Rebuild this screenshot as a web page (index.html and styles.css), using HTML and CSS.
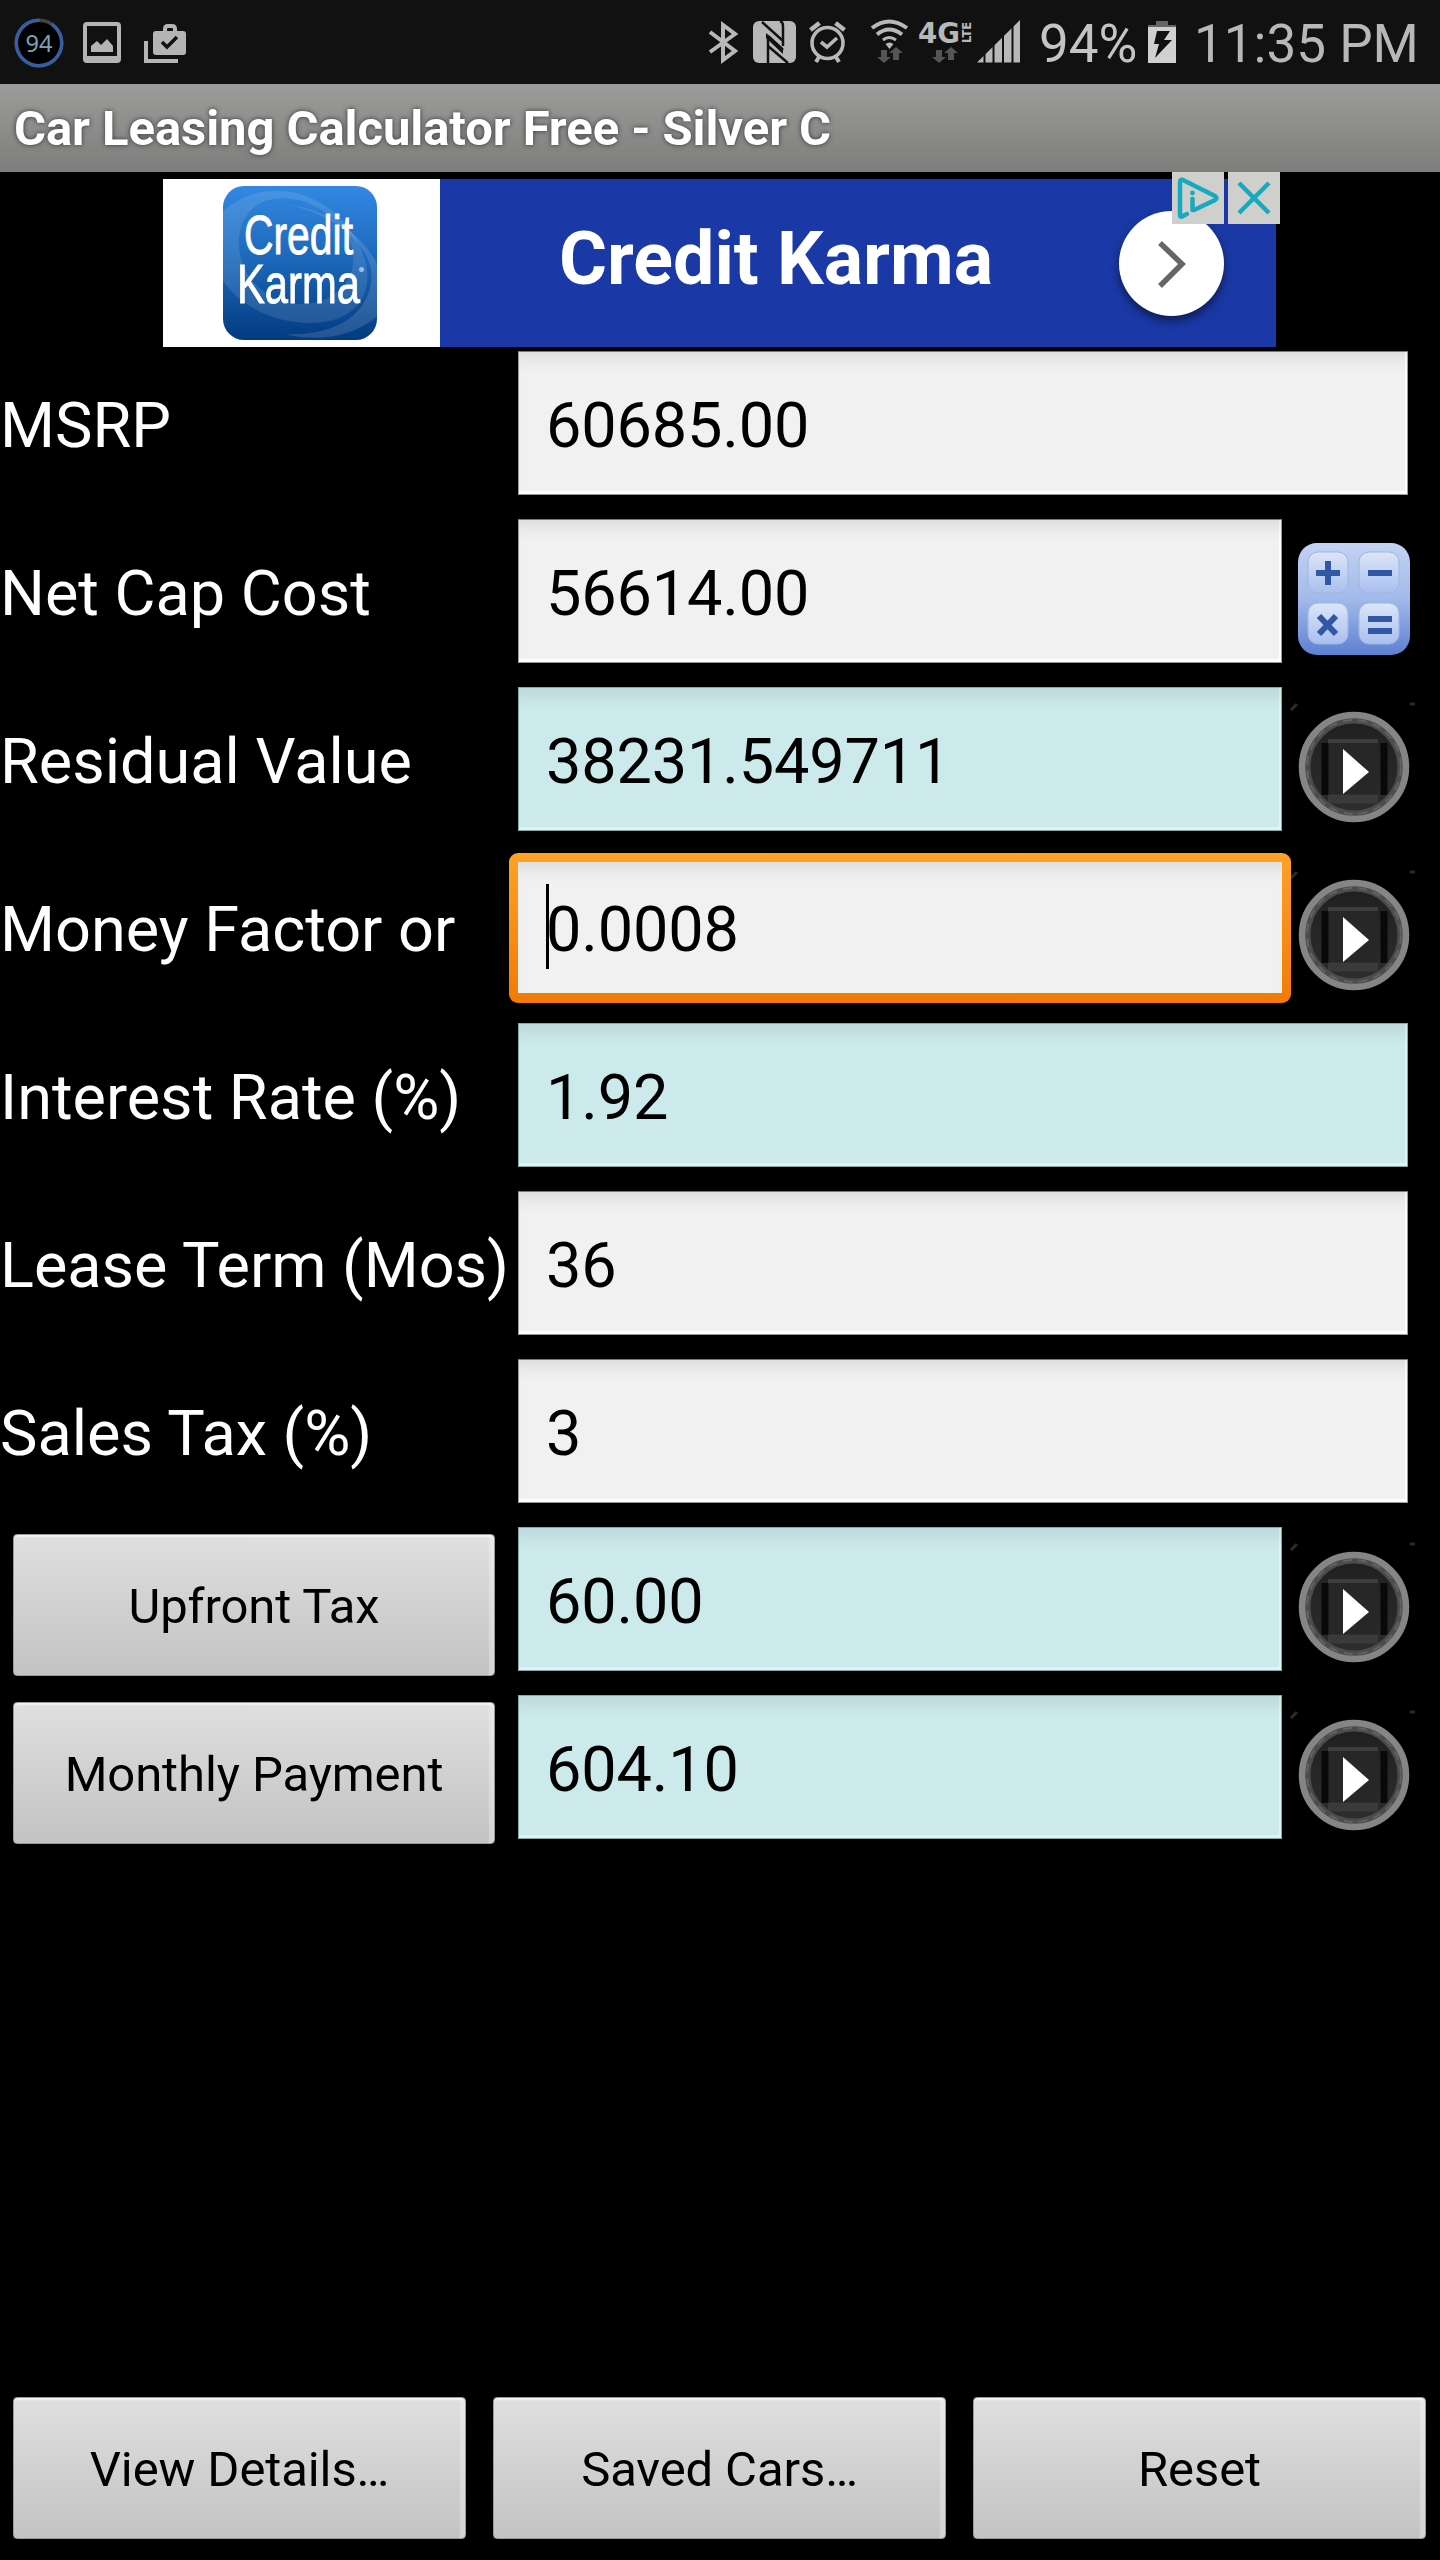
FILE: index.html
```html
<!DOCTYPE html>
<html lang="en">
<head>
  <meta charset="UTF-8">
  <title>Car Leasing Calculator Free - Silver C</title>
  <link rel="stylesheet" href="styles.css">
</head>
<body>
  <svg width="0" height="0" class="defs">
    <defs>
      <linearGradient id="ringFill" x1="0" y1="0" x2="0" y2="1">
        <stop offset="0" stop-color="#1f1f1f"/><stop offset="1" stop-color="#2e2e2e"/>
      </linearGradient>
      <linearGradient id="calcFill" x1="0" y1="0" x2="0" y2="1">
        <stop offset="0" stop-color="#c3d3f3"/><stop offset=".5" stop-color="#a3b9ea"/><stop offset="1" stop-color="#5c80d2"/>
      </linearGradient>
      <linearGradient id="keyFill" x1="0" y1="0" x2="0" y2="1">
        <stop offset="0" stop-color="#dce6f8"/><stop offset="1" stop-color="#a9bfee"/>
      </linearGradient>
      <linearGradient id="karmaFill" x1="0" y1="0" x2="0" y2="1">
        <stop offset="0" stop-color="#3388e2"/><stop offset=".5" stop-color="#1b66b8"/><stop offset="1" stop-color="#023b80"/>
      </linearGradient>
      <clipPath id="karmaClip"><rect width="154" height="154" rx="21"/></clipPath>
      <symbol id="play" viewBox="0 0 130 130">
        <path d="M2 8l6-6M121 2h5" stroke="#2c2c2c" stroke-width="3"/>
        <circle cx="65" cy="65" r="53" fill="url(#ringFill)"/>
        <rect x="39" y="37" width="50" height="60" fill="#272727"/>
        <path d="M36 41v52M95 41v52" stroke="#090909" stroke-width="7"/>
        <path d="M39 39h50" stroke="#3d3d3d" stroke-width="4"/>
        <path d="M39 97h50" stroke="#3a3a3a" stroke-width="9"/>
        <circle cx="65" cy="65" r="46.500" fill="none" stroke="#4c4c4c" stroke-width="6"/>
        <circle cx="65" cy="65" r="47" fill="none" stroke="#626262" stroke-width="2" stroke-dasharray="9 6"/>
        <circle cx="65" cy="65" r="52" fill="none" stroke="#858585" stroke-width="6.500"/>
        <path d="M54 47l26 23-26 22z" fill="#fff"/>
      </symbol>
    </defs>
  </svg>

  <header class="status">
    <div class="status-left">
      <svg class="battery-ring" width="50" height="50" viewBox="0 0 50 50">
        <circle cx="25" cy="25" r="22.7" fill="#000" stroke="#444" stroke-width="3.4"/>
        <circle cx="25" cy="25" r="22.7" fill="none" stroke="#375da3" stroke-width="3.4" stroke-dasharray="129 14" transform="rotate(-56 25 25)"/>
        <text x="25" y="34" text-anchor="middle" class="ring-text" textLength="27" lengthAdjust="spacingAndGlyphs">94</text>
      </svg>
      <svg class="picture" width="38" height="42" viewBox="0 0 38 42">
        <path fill="#b4b4b4" fill-rule="evenodd" d="M4 0h30q4 0 4 4v33q0 4-4 4H4q-4 0-4-4V4q0-4 4-4zM4 4v30h30V4z"/>
        <path fill="#b4b4b4" d="M8 30v-6l6-5 4 4 6-6 6 7v6z"/>
      </svg>
      <svg class="briefcase" width="42" height="40" viewBox="0 0 42 40">
        <path d="M2 17v20h32" fill="none" stroke="#b4b4b4" stroke-width="4"/>
        <path d="M21 9V5q0-3 3-3h4q3 0 3 3v4" fill="none" stroke="#b4b4b4" stroke-width="4"/>
        <rect x="9" y="7" width="33" height="24" rx="3" fill="#b4b4b4"/>
        <path d="M18 18l5 5 10-10" fill="none" stroke="#111" stroke-width="3.6"/>
      </svg>
    </div>
    <div class="status-right">
      <svg width="332" height="84" viewBox="0 0 332 84">
        <g fill="none" stroke="#b8b8b8">
          <path d="M20 32l25 19-12 9V25l12 9-25 18" stroke-width="4"/>
          <circle cx="137.500" cy="43" r="15.500" stroke-width="3.600"/>
          <path d="M131 42l6 5 10-9" stroke-width="3.600"/>
          <path d="M120.500 30l9-7M154.500 30l-9-7" stroke-width="4.500"/>
          <path d="M129 57l-3 5M146 57l3 5" stroke-width="4"/>
          <path d="M182 28q17-13 35 0" stroke-width="4"/>
          <path d="M187 34.500q12-10 25 0" stroke-width="4"/>
          <path d="M193 40q6-5 13 0" stroke-width="3"/>
        </g>
        <path d="M195.500 44q4-3 8 0l-4 5z" fill="#b8b8b8"/>
        <rect x="63" y="21" width="43" height="42" rx="6" fill="#b8b8b8"/>
        <!-- N mark cut out of the tile -->
        <path d="M72 22l21 19V26q0-4-3-5M98 63L78 46v17M78 36v10M93 41v5M78 36l15 14" fill="none" stroke="#111" stroke-width="2.500"/>
        <path d="M76 38l17 16v-6L76 33zM74 24v39" fill="#111"/>
        <g fill="#555">
          <path d="M191 50h6v7h4l-7 6-7-6h4zM203 60h6v-7h4l-7-6-7 6h4z"/>
          <path d="M246 50h6v7h4l-7 6-7-6h4zM258 60h6v-7h4l-7-6-7 6h4z"/>
        </g>
        <text x="228" y="43" class="net" textLength="42" lengthAdjust="spacingAndGlyphs">4G</text>
        <text x="-43" y="281" class="lte" transform="rotate(-90)" textLength="21" lengthAdjust="spacingAndGlyphs">LTE</text>
        <path d="M287 62.500L330 20v42.500z" fill="#b8b8b8"/>
        <path d="M294.500 44v20M303.500 35v29M313 28v36M322.500 20v44" stroke="#111" stroke-width="2"/>
      </svg>
      <span class="percent">94%</span>
      <svg class="charge" width="28" height="42" viewBox="0 0 28 42">
        <path d="M8 0h12v4h8v3H0V4h8z" fill="#666"/>
        <path d="M0 6h28v36H0z" fill="#d0d0d0"/>
        <path d="M9 10h13l-6 9h8L7 37l4-14H6z" fill="#111"/>
      </svg>
      <span class="clock">11:35 PM</span>
    </div>
  </header>

  <h1 class="title">Car Leasing Calculator Free - Silver C</h1>

  <section class="ad">
    <div class="ad-logo">
      <svg width="154" height="154" viewBox="0 0 154 154">
        <g clip-path="url(#karmaClip)">
          <rect width="154" height="154" fill="url(#karmaFill)"/>
          <path d="M-6 32C30-10 95-2 128 45c32 46 16 91-38 92C50 138 12 118-4 88z M50 13C18 18 8 55 22 83c16 34 58 44 87 27 28-18 27-52 6-73C98 20 75 9 50 13z" fill="#fff" fill-opacity=".11" fill-rule="evenodd"/>
          <path d="M64 19c50 4 94 45 96 81v24c-20 24-62 34-98 24 42 2 79-13 86-50C154 62 112 27 64 19z" fill="#fff" fill-opacity=".13"/>
        </g>
        <text x="21" y="68" class="karma" textLength="109" lengthAdjust="spacingAndGlyphs">Credit</text>
        <text x="14" y="117" class="karma" textLength="123" lengthAdjust="spacingAndGlyphs">Karma</text>
        <circle cx="138.500" cy="83.500" r="2.500" fill="#9fc0e6"/>
      </svg>
    </div>
    <div class="ad-name">Credit Karma</div>
    <div class="ad-go">
      <svg width="105" height="105" viewBox="0 0 105 105"><path d="M41 32l22 21-22 22" fill="none" stroke="#666" stroke-width="5.500"/></svg>
    </div>
    <div class="ad-marks">
      <svg width="52" height="52" viewBox="0 0 52 52">
        <path d="M15 42l-5 2.500q-2 1-2-2V10q0-3 3-2l32 16q3 2 0 4L22 38" fill="none" stroke="#18a9c2" stroke-width="4.500" stroke-linecap="round"/>
        <path d="M20.500 27v11" stroke="#18a9c2" stroke-width="4.500" stroke-linecap="round"/>
        <circle cx="20.500" cy="21" r="2.400" fill="#18a9c2"/>
      </svg>
      <svg width="52" height="52" viewBox="0 0 52 52"><path d="M11 11l30 30M41 11L11 41" stroke="#18a9c2" stroke-width="4.500"/></svg>
    </div>
  </section>

  <main class="form">
    <div class="row"><label>MSRP</label><div class="field wide">60685.00</div></div>
    <div class="row"><label>Net Cap Cost</label><div class="field">56614.00</div>
      <svg class="calc" width="112" height="112" viewBox="0 0 112 112">
        <rect width="112" height="112" rx="19" fill="url(#calcFill)"/>
        <g fill="url(#keyFill)" stroke="#a0b5e4">
          <rect x="10" y="9" width="40" height="41" rx="10"/><rect x="61" y="9" width="40" height="41" rx="10"/>
          <rect x="10" y="60" width="40" height="41" rx="10"/><rect x="61" y="60" width="40" height="41" rx="10"/>
        </g>
        <path d="M18 30h24M30 18v24M70 30h24M21 73l17 18M38 73L21 91M70 76h24M70 88h24" stroke="#3157a6" stroke-width="6"/>
      </svg>
    </div>
    <div class="row"><label>Residual Value</label><div class="field calculated">38231.549711</div><svg class="play"><use href="#play"/></svg></div>
    <div class="row"><label>Money Factor or</label><div class="field focused"><i class="caret"></i>0.0008</div><svg class="play"><use href="#play"/></svg></div>
    <div class="row"><label>Interest Rate (%)</label><div class="field wide calculated">1.92</div></div>
    <div class="row"><label>Lease Term (Mos)</label><div class="field wide">36</div></div>
    <div class="row"><label>Sales Tax (%)</label><div class="field wide">3</div></div>
    <div class="row"><button class="btn">Upfront Tax</button><div class="field calculated">60.00</div><svg class="play"><use href="#play"/></svg></div>
    <div class="row"><button class="btn">Monthly Payment</button><div class="field calculated">604.10</div><svg class="play"><use href="#play"/></svg></div>
  </main>

  <footer class="actions">
    <button class="btn">View Details…</button>
    <button class="btn">Saved Cars…</button>
    <button class="btn">Reset</button>
  </footer>
</body>
</html>
```
FILE: styles.css
```css
* { box-sizing: border-box; }
body { margin: 0; width: 1440px; height: 2560px; background: #000; color: #fff; font-family: Roboto, sans-serif; display: flex; flex-direction: column; overflow: hidden; }
svg { display: block; flex: none; }
.defs { position: absolute; }

.status { height: 84px; flex: none; background: #111; display: flex; justify-content: space-between; }
.status-left { display: flex; padding: 18px 0 0 14px; }
.picture { margin: 4px 0 0 19px; }
.briefcase { margin: 6px 0 0 23px; }
.ring-text { font: 24px "Noto Sans", sans-serif; fill: #7fa0b8; }
.status-right { display: flex; color: #c4c4c4; font-size: 53px; line-height: 88px; white-space: nowrap; }
.net { font: bold 29px "DejaVu Sans", sans-serif; fill: #b8b8b8; }
.lte { font: bold 13px "DejaVu Sans", sans-serif; fill: #b8b8b8; }
.percent { width: 98px; margin-left: 17px; }
.charge { margin: 21px 0 0 11px; }
.clock { width: 246px; margin-left: 18px; color: #b8b8b8; }

.title { margin: 0; height: 88px; flex: none; padding-left: 14px; background: linear-gradient(#9c9d9b, #7d7d7c); font-size: 49px; font-weight: bold; line-height: 89px; letter-spacing: -.08px; text-shadow: 0 0 5px #333; }

.ad { position: relative; flex: none; width: 1113px; height: 168px; margin: 7px 0 0 163px; background: #1a39a6; display: flex; align-items: center; }
.ad-logo { width: 277px; height: 168px; padding: 7px 0 0 60px; background: #fff; }
.ad-logo svg { overflow: visible; }
.karma { font: 56px "Liberation Sans", sans-serif; fill: #fff; stroke: #fff; stroke-width: .9px; }
.ad-name { width: 672px; text-align: center; font-size: 73.5px; font-weight: bold; line-height: 160px; padding-bottom: 8px; }
.ad-go { width: 105px; height: 105px; margin-left: 7px; border-radius: 50%; background: #fff; box-shadow: 0 5px 10px rgba(0, 0, 0, .5); }
.ad-marks { position: absolute; top: -7px; right: -4px; display: flex; gap: 4px; }
.ad-marks svg { background: #cfcfcc; }

.form { padding-top: 4px; }
.row { height: 168px; display: flex; align-items: flex-start; font-size: 63px; }
.row label { width: 518px; line-height: 150px; white-space: nowrap; }
.field { position: relative; width: 764px; height: 144px; padding-left: 27px; line-height: 148px; letter-spacing: -.16px; color: #000; background: #f1f1f1; border: 1px solid #999; border-top-color: #777; box-shadow: inset 0 18px 18px -12px rgba(0, 0, 0, .09), inset -2px -3px 0 #fff; }
.wide { width: 890px; }
.calculated { background: #cce9eb; border-color: #8ba5a7; box-shadow: inset 0 18px 18px -12px rgba(0, 0, 0, .09), inset -2px -3px 0 #d9f7f8; }
/* the highlight frame hangs over the edges of a normal field */
.focused { z-index: 0; border: 0; padding-left: 28px; line-height: 150px; }
.focused::before { content: ""; position: absolute; z-index: -1; inset: -2px -9px -4px; border-radius: 9px; background: linear-gradient(#fea127, #f27a07); }
.focused::after { content: ""; position: absolute; z-index: -1; inset: 7px 0 6px; background: #f1f1f1; box-shadow: inset 0 18px 18px -12px rgba(0, 0, 0, .09); }
.caret { position: absolute; left: 28px; top: 29px; width: 3px; height: 85px; background: #000; }
.play { width: 130px; height: 130px; margin: 15px 0 0 7px; }
.calc { margin: 24px 0 0 16px; }

.btn { font: 49px Roboto, sans-serif; letter-spacing: -.1px; color: #000; height: 142px; border: 1px solid #999; border-radius: 4px; padding: 3px 0 0; background: linear-gradient(#dfdfdf, #c3c3c3); box-shadow: inset 0 3px 2px -1px #f4f4f4, inset -6px 0 2px -1px rgba(255, 255, 255, .3); }
.row .btn { flex: none; width: 482px; margin: 7px 23px 0 13px; }
.actions { margin-top: auto; padding: 0 14px 21px 13px; display: grid; grid-template-columns: repeat(3, 1fr); gap: 27px; }
```
